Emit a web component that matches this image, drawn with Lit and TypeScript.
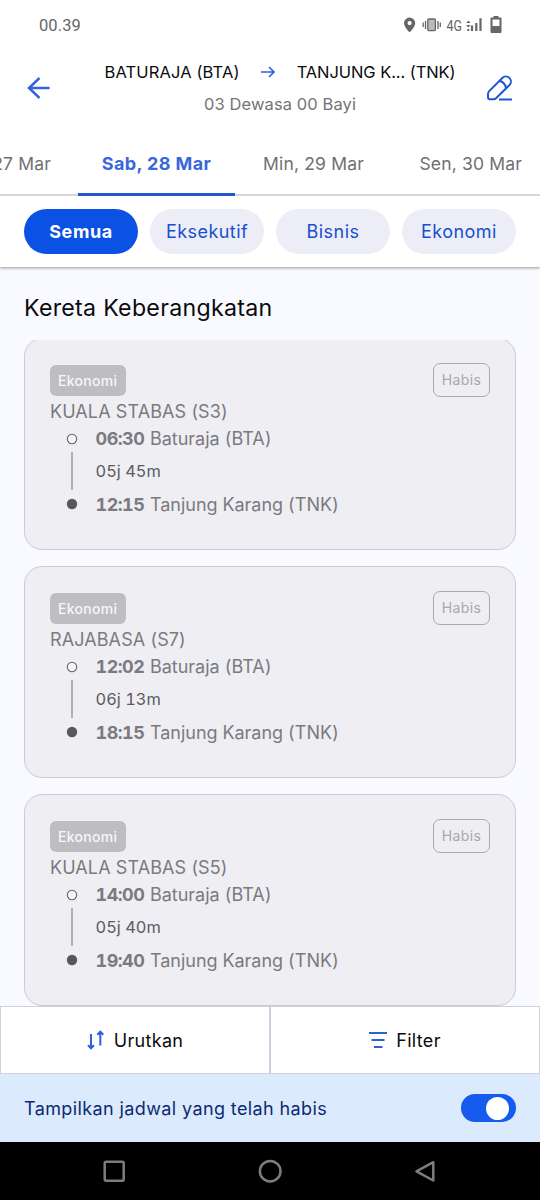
import { LitElement, html, css, svg } from "lit";
import { customElement, property, state } from "lit/decorators.js";
import { classMap } from "lit/directives/class-map.js";

interface Train {
  name: string;
  depart: string;
  duration: string;
  arrive: string;
}

const TRAINS: Train[] = [
  { name: "KUALA STABAS (S3)", depart: "06:30", duration: "05j 45m", arrive: "12:15" },
  { name: "RAJABASA (S7)", depart: "12:02", duration: "06j 13m", arrive: "18:15" },
  { name: "KUALA STABAS (S5)", depart: "14:00", duration: "05j 40m", arrive: "19:40" },
];

@customElement("train-card")
export class TrainCard extends LitElement {
  @property({ attribute: false }) train!: Train;

  static styles = css`
    :host {
      display: block;
      box-sizing: border-box;
      height: 212px;
      padding: 24px 25px 0 25px;
      border: 1px solid #cbcad2;
      border-radius: 18px;
      background: #efeef3;
      color: #7b7a80;
      font-size: 18px;
    }
    .top {
      display: flex;
      justify-content: space-between;
      align-items: center;
      height: 34px;
    }
    .klass {
      box-sizing: border-box;
      width: 75.5px;
      height: 31px;
      line-height: 31px;
      text-align: center;
      border-radius: 6px;
      background: #bebdc1;
      color: #f7f7fa;
      font-size: 14px;
      font-weight: 500;
      letter-spacing: 0.3px;
    }
    .sold {
      box-sizing: border-box;
      width: 57px;
      height: 34px;
      line-height: 32px;
      text-align: center;
      border: 1.5px solid #a9a8ad;
      border-radius: 7px;
      color: #a9a8ad;
      font-size: 14px;
      letter-spacing: 0.4px;
    }
    .name {
      height: 28px;
      line-height: 29px;
      letter-spacing: 0.1px;
    }
    .route {
      display: grid;
      grid-template-columns: 44px 1fr;
      column-gap: 1.5px;
      grid-template-rows: 27px 38px 28px;
      align-items: center;
      white-space: nowrap;
      font-variant-numeric: tabular-nums;
    }
    .mark {
      display: block;
      justify-self: center;
    }
    .stop {
      display: flex;
      letter-spacing: -0.02px;
    }
    .duration {
      color: #5c5b61;
      font-size: 16.4px;
    }
    b {
      width: 54.5px;
      font-weight: 700;
      letter-spacing: -0.5px;
    }
  `;

  render() {
    const t = this.train;
    return html`
      <div class="top"><span class="klass">Ekonomi</span><span class="sold">Habis</span></div>
      <div class="name">${t.name}</div>
      <div class="route">
        <svg class="mark" width="12" height="12"><circle cx="6" cy="6" r="4.7" fill="#f5f4f8" stroke="#66656b" stroke-width="1.1" /></svg>
        <span class="stop"><b>${t.depart}</b>Baturaja (BTA)</span>
        <svg class="mark" width="2" height="38"><path d="M1 0V38" stroke="#8d8c92" stroke-width="1.3" /></svg>
        <span class="duration">${t.duration}</span>
        <svg class="mark" width="12" height="12"><circle cx="6" cy="6" r="5.2" fill="#58575d" /></svg>
        <span class="stop"><b>${t.arrive}</b>Tanjung Karang (TNK)</span>
      </div>
    `;
  }
}

@customElement("app-root")
export class AppRoot extends LitElement {
  @state() private showSoldOut = true;
  @state() private active = "Semua";

  static styles = css`
    :host {
      display: flex;
      flex-direction: column;
      width: 540px;
      height: 1200px;
      overflow: hidden;
      background: #f9faff;
      font-family: Inter, "Liberation Sans", sans-serif;
      color: #0b0b0d;
    }
    svg {
      display: block;
      flex: none;
    }
    .head {
      flex: none;
      height: 267px;
      background: #fff;
      box-shadow: 0 1px 3px rgba(0, 0, 0, 0.4);
      white-space: nowrap;
    }
    .status {
      display: flex;
      justify-content: space-between;
      align-items: center;
      height: 50px;
      padding: 0 37px 0 39px;
      font-family: Roboto, sans-serif;
      font-size: 16.5px;
      letter-spacing: 0.1px;
      color: #666;
    }
    .network {
      font-size: 15.5px;
      letter-spacing: 0;
    }
    .bar {
      display: grid;
      grid-template-columns: 54px 1fr 54px;
      align-items: center;
      height: 77px;
      box-sizing: border-box;
    }
    .back {
      margin: -2px 0 0 26px;
    }
    .edit {
      margin-top: -2px;
    }
    .stations {
      display: flex;
      align-items: center;
      justify-content: center;
      height: 31px;
      font-size: 16.5px;
      padding-left: 20px;
    }
    .stations svg {
      margin: 0 21px 0 20px;
    }
    .from {
      letter-spacing: 0.13px;
    }
    .to {
      letter-spacing: -0.08px;
    }
    .pax {
      height: 34px;
      line-height: 34px;
      text-align: center;
      font-size: 16.5px;
      letter-spacing: 0.1px;
      color: #747474;
      padding-left: 20px;
    }
    .dates {
      display: grid;
      grid-template-columns: 78px 157px 157px 148px;
      height: 69px;
      box-sizing: border-box;
      box-shadow: inset 0 -2px #d6d6d6;
      font-size: 17.5px;
      line-height: 73px;
      letter-spacing: 0.17px;
      color: #6f6f73;
      overflow: hidden;
    }
    .date {
      display: flex;
      justify-content: center;
    }
    .date.first {
      justify-content: flex-end;
      padding-right: 27px;
    }
    .date.last {
      justify-content: flex-end;
      padding-right: 18px;
    }
    .date.on {
      color: #3a67dd;
      font-weight: 700;
      font-size: 18px;
      letter-spacing: 0.4px;
      border-bottom: 3px solid #2156d0;
      height: 66px;
    }
    .chips {
      display: grid;
      grid-template-columns: repeat(4, 114px);
      gap: 12px;
      padding: 13px 24px 0;
    }
    .chip {
      height: 45px;
      line-height: 46px;
      border-radius: 23px;
      background: #ecedf6;
      color: #1650cf;
      text-align: center;
      font-size: 18px;
      letter-spacing: 0.45px;
    }
    .chip.on {
      background: #0b51e4;
      color: #fff;
      font-weight: 700;
      letter-spacing: 0.6px;
    }
    h1 {
      flex: none;
      margin: 0;
      height: 73px;
      line-height: 83px;
      padding-left: 24px;
      font-size: 23.2px;
      font-weight: 400;
      letter-spacing: 0.27px;
    }
    .list {
      flex: none;
      height: 666px;
      overflow: hidden;
      padding: 0 24px;
    }
    .stack {
      display: grid;
      gap: 16px;
      margin-top: -2px;
    }
    .tools {
      flex: none;
      display: grid;
      grid-template-columns: 1fr 1fr;
      height: 68px;
    }
    .tool {
      display: flex;
      align-items: center;
      justify-content: center;
      gap: 9px;
      border: 1.5px solid #cfcfe2;
      background: #fff;
      font-size: 18px;
      letter-spacing: 0.32px;
    }
    .soldout {
      flex: none;
      display: flex;
      align-items: center;
      justify-content: space-between;
      height: 68px;
      padding: 0 24px;
      background: #dceafe;
      color: #0c2a70;
      font-size: 18px;
      letter-spacing: 0.39px;
    }
    .switch {
      box-sizing: border-box;
      width: 55px;
      height: 28px;
      padding: 2.5px 7px 2.5px 2.5px;
      border-radius: 14px;
      background: #9aa5bd;
      display: flex;
    }
    .switch.on {
      background: #145bee;
      justify-content: flex-end;
    }
    .knob {
      width: 23px;
      height: 23px;
      border-radius: 50%;
      background: #fff;
    }
    .nav {
      flex: none;
      height: 58px;
      background: #000;
    }
  `;

  private statusIcons() {
    return html`<svg width="100" height="20" viewBox="403 15 100 20">
      ${svg`
      <path fill="#666" fill-rule="evenodd" d="M409.6 17.500a5.600 5.600 0 0 0-5.600 5.600c0 4 5.600 9.300 5.600 9.300s5.600-5.300 5.600-9.300a5.600 5.600 0 0 0-5.600-5.600zm0 3.500a2.100 2.100 0 1 1 0 4.200 2.100 2.100 0 0 1 0-4.200z"/>
      <rect x="427.800" y="19" width="7.600" height="11.600" rx="1" fill="#bbb" stroke="#666" stroke-width="1.300"/>
      <path d="M423.200 22.500v4.500M425.500 21v8M438 21v8M440.300 22.500v4.500" stroke="#666" stroke-width="1.300"/>
      <text class="network" x="446.500" y="30.800" textLength="15.500" lengthAdjust="spacingAndGlyphs" fill="#666">4G</text>
      <path d="M472 31v-5.500M476.300 31v-8M480.500 31v-12.800" stroke="#666" stroke-width="2.200"/>
      <path d="M466.200 23l2.200-2.500 2.200 2.500zM466.200 25l2.200 2.500 2.200-2.500z" fill="#666"/><rect x="467.300" y="29" width="2" height="2" fill="#666"/>
      <path fill="#666" fill-rule="evenodd" d="M493.500 16h5v1.500h2q1 0 1 1V32q0 1-1 1h-9q-1 0-1-1V18.500q0-1 1-1h2zM492.500 19.500v6.500h7v-6.500z"/>`}
    </svg>`;
  }

  render() {
    const chips = ["Semua", "Eksekutif", "Bisnis", "Ekonomi"];
    return html`
      <div class="head">
        <div class="status"><span>00.39</span>${this.statusIcons()}</div>
        <div class="bar">
          <svg class="back" width="24" height="24" viewBox="26 76 24 24"><path d="M49.500 88H29M39.500 78L29 88l10.500 10" fill="none" stroke="#3563dc" stroke-width="2.500"/></svg>
          <div>
            <div class="stations">
              <span class="from">BATURAJA (BTA)</span>
              <svg width="16" height="14" viewBox="260 65 16 14"><path d="M261 72h13M269 67l5 5-5 5" fill="none" stroke="#2b5fdb" stroke-width="1.600"/></svg>
              <span class="to">TANJUNG K... (TNK)</span>
            </div>
            <div class="pax">03 Dewasa 00 Bayi</div>
          </div>
          <svg class="edit" width="28" height="28" viewBox="486 74 28 28"><path d="M502.300 78a5 5 0 0 1 7.200 7L496.300 98Q495 99.300 493.500 99.300H490Q488 99.300 488 97.300V94Q488 92.300 489.200 91.100ZM499.500 81q5.200.8 6.500 7M499 99.500H512" fill="none" stroke="#1c55d6" stroke-width="2" stroke-linejoin="round"/></svg>
        </div>
        <div class="dates">
          <span class="date first">27 Mar</span>
          <span class="date on">Sab, 28 Mar</span>
          <span class="date">Min, 29 Mar</span>
          <span class="date last">Sen, 30 Mar</span>
        </div>
        <div class="chips">
          ${chips.map(
            (c) => html`<div class=${classMap({ chip: true, on: c === this.active })} @click=${() => (this.active = c)}>${c}</div>`
          )}
        </div>
      </div>
      <h1>Kereta Keberangkatan</h1>
      <div class="list">
        <div class="stack">${TRAINS.map((t) => html`<train-card .train=${t}></train-card>`)}</div>
      </div>
      <div class="tools">
        <div class="tool">
          <svg width="18" height="20" viewBox="87 1030 18 20"><path d="M91 1034v14M88 1045.300l3 3 3-3M100.300 1045.500V1032M97.300 1034.700l3-3 3 3" fill="none" stroke="#2b5fdb" stroke-width="2"/></svg>
          <span>Urutkan</span>
        </div>
        <div class="tool">
          <svg width="18" height="18" viewBox="0 0 18 18"><path d="M0 2h18M2.500 9h13M5 16h8.500" fill="none" stroke="#2b62d2" stroke-width="1.800"/></svg>
          <span>Filter</span>
        </div>
      </div>
      <div class="soldout">
        <span>Tampilkan jadwal yang telah habis</span>
        <div class=${classMap({ switch: true, on: this.showSoldOut })} @click=${() => (this.showSoldOut = !this.showSoldOut)}>
          <div class="knob"></div>
        </div>
      </div>
      <svg class="nav" width="540" height="58" viewBox="0 1142 540 58" fill="none" stroke="#7d7d7d" stroke-width="2.500">
        <rect x="104.700" y="1161.800" width="19" height="19" rx="1.500"/>
        <circle cx="270.200" cy="1171.200" r="10.300"/>
        <path d="M433.300 1162.200v18.300L416.500 1171.300z" stroke-linejoin="round"/>
      </svg>
    `;
  }
}
